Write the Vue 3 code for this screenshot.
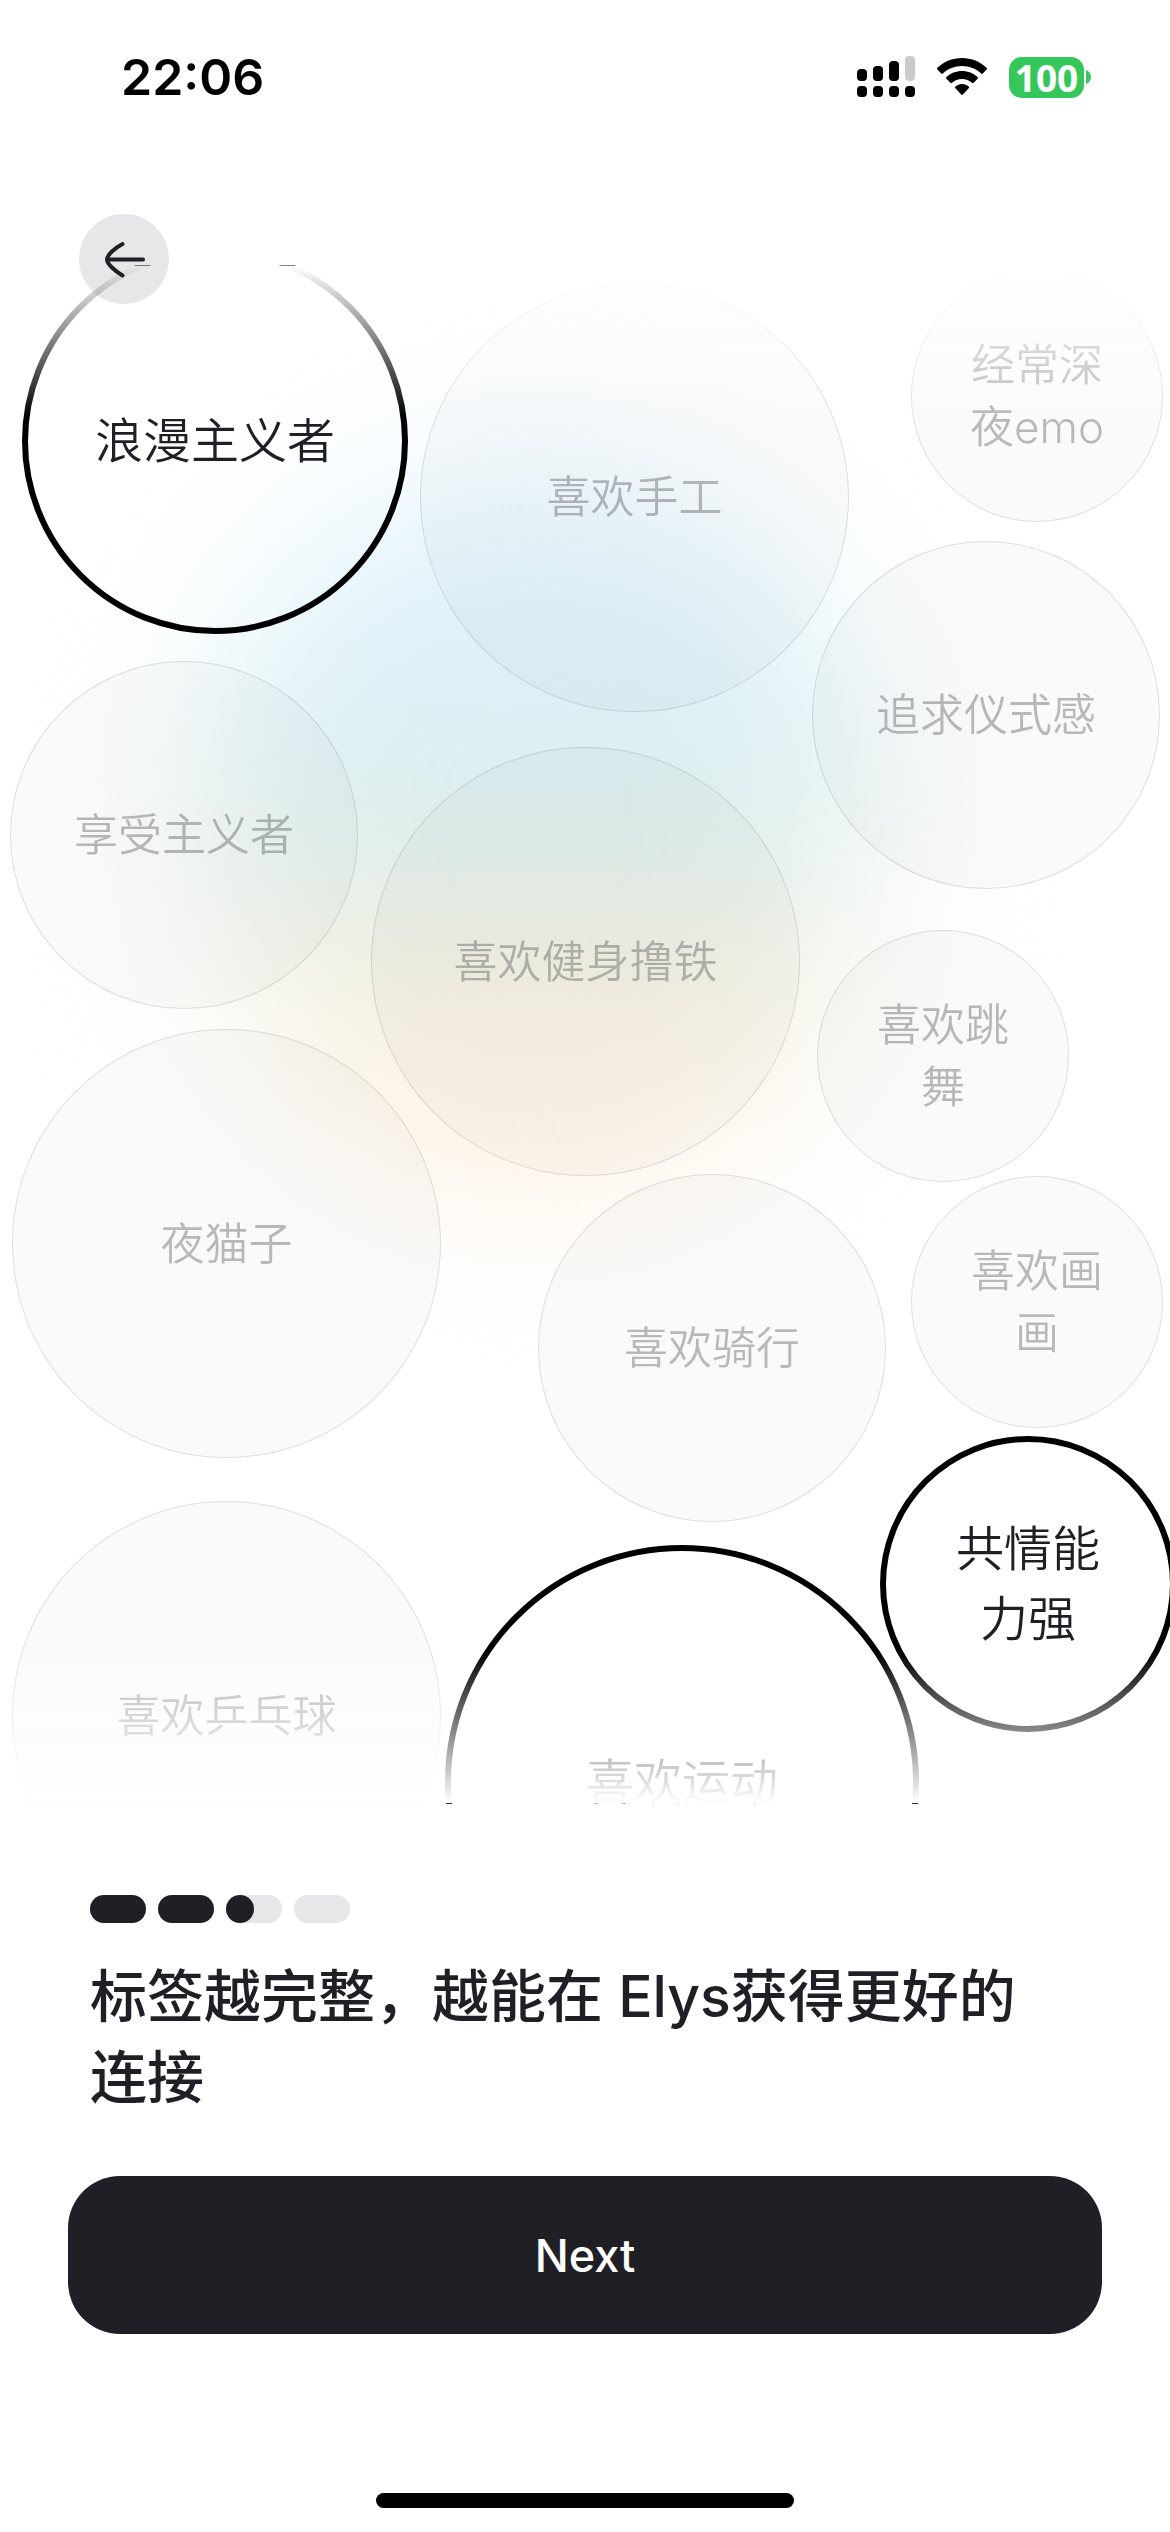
<script setup>
import { ref } from 'vue'

// The bubble field is a free canvas; positions are in its own units.
const FIELD_W = 1170
const FIELD_H = 1539

const tags = ref([
  { label: '浪漫主义者', x: 22, y: -17, d: 386, picked: true },
  { label: '喜欢手工', x: 420, y: 18, d: 429, picked: false },
  { label: '经常深夜emo', x: 911, y: 5, d: 252, picked: false },
  { label: '追求仪式感', x: 812, y: 276, d: 348, picked: false },
  { label: '享受主义者', x: 10, y: 396, d: 348, picked: false },
  { label: '喜欢健身撸铁', x: 371, y: 482, d: 429, picked: false },
  { label: '喜欢跳舞', x: 817, y: 665, d: 252, picked: false },
  { label: '夜猫子', x: 12, y: 764, d: 429, picked: false },
  { label: '喜欢骑行', x: 538, y: 909, d: 348, picked: false },
  { label: '喜欢画画', x: 911, y: 911, d: 252, picked: false },
  { label: '共情能力强', x: 880, y: 1171, d: 296, picked: true },
  { label: '喜欢乒乓球', x: 12, y: 1236, d: 429, picked: false },
  { label: '喜欢运动', x: 445, y: 1280, d: 474, picked: true }
])

const steps = [100, 100, 50, 0]

const place = (t) => ({
  left: `${(t.x / FIELD_W) * 100}%`,
  top: `${(t.y / FIELD_H) * 100}%`,
  width: `${(t.d / FIELD_W) * 100}%`
})
</script>

<template>
  <main class="page">
    <header class="status">
      <time class="clock">22:06</time>
      <div class="indicators">
        <svg class="signal" viewBox="0 0 58 42" aria-hidden="true">
          <rect x="0" y="13" width="10" height="12" rx="4" />
          <rect x="16" y="10" width="10" height="15" rx="4" />
          <rect x="32" y="5" width="10" height="20" rx="4" />
          <rect x="48" y="0" width="10" height="25" rx="4" fill="#cbcbcb" />
          <rect x="0" y="30" width="10" height="11" rx="4" />
          <rect x="16" y="30" width="10" height="11" rx="4" />
          <rect x="32" y="30" width="10" height="11" rx="4" />
          <rect x="48" y="30" width="10" height="11" rx="4" />
        </svg>
        <svg class="wifi" viewBox="0 0 50 38" aria-hidden="true">
          <path d="M25 0C15.4 0 6.700 3.700.400 9.800a1.200 1.200 0 0 0 0 1.700l3.800 3.900a1.200 1.200 0 0 0 1.700 0C10.900 10.700 17.600 7.900 25 7.900s14.100 2.800 19.100 7.500a1.200 1.200 0 0 0 1.700 0l3.800-3.900a1.200 1.200 0 0 0 0-1.700C43.300 3.700 34.600 0 25 0Z" />
          <path d="M25 13c-6 0-11.500 2.300-15.600 6.100a1.200 1.200 0 0 0 0 1.700l4 4a1.200 1.200 0 0 0 1.600 0c2.600-2.400 6.100-3.900 10-3.900s7.400 1.500 10 3.900a1.200 1.200 0 0 0 1.600 0l4-4a1.200 1.200 0 0 0 0-1.700C36.500 15.300 31 13 25 13Z" />
          <path d="M25 26c-2.500 0-4.800.9-6.600 2.400a1.200 1.200 0 0 0 0 1.800l5.800 6.300a1.200 1.200 0 0 0 1.700 0l5.800-6.300a1.200 1.200 0 0 0 0-1.800C29.800 26.900 27.500 26 25 26Z" />
        </svg>
        <div class="battery">
          <span class="charge">100</span>
          <svg class="nub" viewBox="0 0 5 14" aria-hidden="true"><path d="M0 0c3 1 5 4 5 7s-2 6-5 7Z" /></svg>
        </div>
      </div>
    </header>

    <nav class="bar">
      <button class="back" type="button" aria-label="返回">
        <svg viewBox="0 0 90 90" aria-hidden="true">
          <path d="M64 45.500H28M43.500 30C36 34 28 41 28 45.500S36 57 43.500 61.500" />
        </svg>
      </button>
    </nav>

    <section class="field">
      <div class="glow"></div>
      <div class="bubbles">
        <button
          v-for="tag in tags"
          :key="tag.label"
          type="button"
          class="bubble"
          :class="{ picked: tag.picked }"
          :style="place(tag)"
          :aria-pressed="tag.picked"
          @click="tag.picked = !tag.picked"
        >{{ tag.label }}</button>
      </div>
    </section>

    <section class="foot">
      <div class="steps">
        <span v-for="(s, i) in steps" :key="i" class="step">
          <span class="fill" :style="{ width: s + '%' }"></span>
        </span>
      </div>
      <h1 class="title">标签越完整，越能在 Elys获得更好的连接</h1>
      <button class="next" type="button">Next</button>
    </section>

    <div class="home"></div>
  </main>
</template>

<style>
body {
  margin: 0;
  background: #fff;
}
</style>

<style scoped>
.page {
  display: flex;
  flex-direction: column;
  min-height: 100vh;
  overflow: hidden;
  box-sizing: border-box;
  padding-bottom: 24px;
  background: #fff;
  color: #211f26;
  font-family: Inter, "Noto Sans CJK SC", sans-serif;
}

button {
  font: inherit;
  color: inherit;
  border: 0;
  padding: 0;
  margin: 0;
  cursor: pointer;
}

.status {
  display: flex;
  justify-content: space-between;
  align-items: center;
  height: 154px;
  padding: 0 79px 0 121px;
  color: #000;
}

.clock {
  font-size: 50px;
  font-weight: 600;
  line-height: 60px;
}

.indicators {
  display: flex;
  align-items: center;
  gap: 22px;
}

.signal {
  width: 58px;
  height: 42px;
}

.wifi {
  width: 50px;
  height: 38px;
}

.battery {
  display: flex;
  align-items: center;
  gap: 2px;
}

.charge {
  width: 75px;
  height: 41px;
  border-radius: 13px;
  background: #35c759;
  color: #fff;
  font-family: "Noto Sans", sans-serif;
  font-size: 37px;
  font-weight: 700;
  line-height: 41px;
  text-align: center;
}

.nub {
  width: 5px;
  height: 14px;
  fill: #35c759;
}

.bar {
  display: flex;
  padding: 60px 79px 0;
}

.back {
  width: 90px;
  height: 90px;
  border-radius: 50%;
  background: #e7e7ea;
}

.back svg {
  display: block;
  fill: none;
  stroke: #211f26;
  stroke-width: 4;
  stroke-linecap: round;
  stroke-linejoin: round;
}

.field {
  position: relative;
  margin-top: -39px;
  aspect-ratio: 1170 / 1539;
  pointer-events: none;
}

.glow {
  position: absolute;
  left: 18%;
  top: 13%;
  width: 56%;
  height: 47%;
  border-radius: 50%;
  background: linear-gradient(#e4f4fd 8%, #d8eff6 32%, #dceeed 50%, #efefe0 66%, #fdf0e0 84%);
  filter: blur(90px);
}

.bubbles {
  position: absolute;
  inset: 0;
  overflow: hidden;
  mask-image: linear-gradient(
    rgba(0, 0, 0, 0.5) 1px,
    transparent 1px,
    #000 10%,
    #000 90%,
    transparent calc(100% - 1px),
    rgba(0, 0, 0, 0.8) calc(100% - 1px)
  );
}

.bubble {
  position: absolute;
  display: flex;
  align-items: center;
  justify-content: center;
  box-sizing: border-box;
  aspect-ratio: 1;
  padding: 0 54px;
  border: 1px solid rgba(33, 31, 38, 0.12);
  border-radius: 50%;
  background: rgba(33, 31, 38, 0.025);
  color: rgba(33, 31, 38, 0.3);
  font-size: 44px;
  font-weight: 350;
  line-height: 62px;
  text-align: center;
  pointer-events: auto;
}

.bubble.picked {
  border: 6px solid #000;
  background: transparent;
  color: #211f26;
  font-size: 48px;
  line-height: 70px;
}

.foot {
  display: flex;
  flex-direction: column;
  padding: 91px 68px 0;
}

.steps {
  display: flex;
  gap: 12px;
  padding: 0 22px;
}

.step {
  width: 56px;
  height: 28px;
  border-radius: 14px;
  background: #e7e7ea;
}

.fill {
  display: block;
  height: 100%;
  border-radius: 14px;
  background: #211f26;
}

.title {
  max-width: 17em;
  margin: 33px 0 58px;
  padding: 0 22px;
  font-size: 57px;
  font-weight: 500;
  line-height: 81px;
}

.next {
  height: 158px;
  border-radius: 52px;
  background: #211f26;
  color: #fff;
  font-size: 45px;
  font-weight: 500;
}

.home {
  width: 418px;
  height: 15px;
  margin: auto auto 0;
  border-radius: 8px;
  background: #000;
}
</style>
